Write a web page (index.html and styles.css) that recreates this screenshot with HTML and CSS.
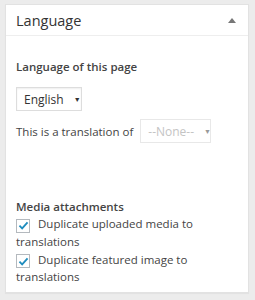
FILE: index.html
```html
<!DOCTYPE html>
<html lang="en">
<head>
    <meta charset="UTF-8">
    <title>Language</title>
    <link rel="stylesheet" href="styles.css">
</head>
<body>
    <div class="postbox">
        <div class="postbox-header">
            <h2>Language</h2>
            <span class="toggle-arrow"></span>
        </div>
        <div class="inside">
            <p class="label">Language of this page</p>
            <div class="select lang-select">
                <span>English</span>
                <span class="caret">&#9660;</span>
            </div>
            <div class="translation-row">
                <span>This is a translation of</span>
                <div class="select disabled">
                    <span>--None--</span>
                    <span class="caret">&#9660;</span>
                </div>
            </div>
            <p class="label media-label">Media attachments</p>
            <label class="check">
                <span class="box">
                    <svg width="11" height="9" viewBox="0 0 12 10"><path d="M1.5 5.2 L4.5 8.2 L10.5 1.5" fill="none" stroke="#1e8cbe" stroke-width="2"/></svg>
                </span>Duplicate uploaded media to translations
            </label>
            <label class="check">
                <span class="box">
                    <svg width="11" height="9" viewBox="0 0 12 10"><path d="M1.5 5.2 L4.5 8.2 L10.5 1.5" fill="none" stroke="#1e8cbe" stroke-width="2"/></svg>
                </span>Duplicate featured image to translations
            </label>
        </div>
    </div>
</body>
</html>
```

FILE: styles.css
```css
* {
    margin: 0;
    padding: 0;
    box-sizing: border-box;
}

body {
    background-color: #ececec;
    font-family: "Open Sans", sans-serif;
    color: #444;
    padding: 4px 6px 7px 5px;
}

.postbox {
    background-color: #fff;
    border: 1px solid #e2e2e2;
    box-shadow: 0 1px 1px rgba(0, 0, 0, 0.04);
    height: 289px;
}

.postbox-header {
    display: flex;
    justify-content: space-between;
    align-items: center;
    height: 31px;
    padding: 0 12px 0 10px;
    border-bottom: 1px solid #eee;
}

.postbox-header h2 {
    font-size: 14.5px;
    font-weight: normal;
    color: #333;
}

.toggle-arrow {
    width: 0;
    height: 0;
    border-left: 4px solid transparent;
    border-right: 4px solid transparent;
    border-bottom: 5px solid #777;
}

.inside {
    padding: 23px 20px 0 10px;
    font-size: 11.5px;
}

.label {
    font-weight: 600;
    color: #444;
}

.select {
    display: inline-flex;
    align-items: center;
    gap: 10px;
    height: 24px;
    padding: 0 6px 0 7px;
    border: 1px solid #ddd;
    box-shadow: inset 0 1px 2px rgba(0, 0, 0, 0.07);
    color: #333;
    white-space: nowrap;
    font-size: 12px;
}

.lang-select {
    width: 66px;
    margin-top: 13px;
}

.caret {
    font-size: 7px;
}

.translation-row {
    display: flex;
    align-items: center;
    gap: 7px;
    margin-top: 8px;
}

.select.disabled {
    color: #c4c4c4;
    width: 71px;
    justify-content: space-between;
    box-shadow: none;
    border-color: #e8e8e8;
}

.select.disabled .caret {
    color: #999;
}

.media-label {
    margin-top: 56px;
}

.check {
    display: block;
    line-height: 17px;
    margin-top: 1px;
}

.box {
    display: inline-flex;
    align-items: center;
    justify-content: center;
    width: 14px;
    height: 14px;
    margin-right: 8px;
    vertical-align: -2px;
    border: 1px solid #b4b9be;
}
```
